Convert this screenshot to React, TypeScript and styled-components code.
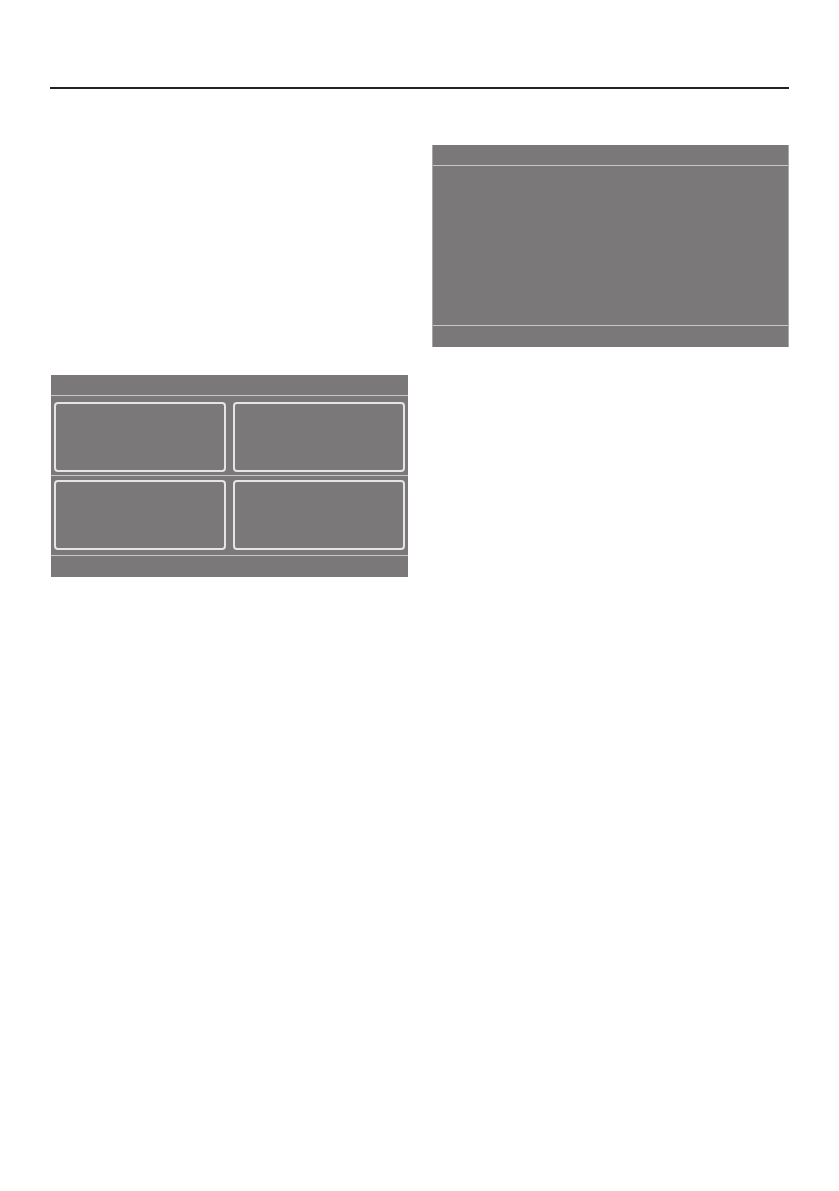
import React from 'react';
import styled, {createGlobalStyle} from 'styled-components';

const Global = createGlobalStyle`
  html, body {
    margin: 0;
    background: #fff;
    font-family: "Liberation Sans", Arial, sans-serif;
  }
`
const Page = styled.div`
  width: 839px;
  min-height: 1191px;
  padding: 87px 50px 0 50px;
  box-sizing: border-box;
`
const Rule = styled.div`
  height: 2px;
  background: #222;
`
const Columns = styled.div`
  display: grid;
  grid-template-columns: 357px 357px;
  column-gap: 24px;
  align-items: start;
  margin: 56px 0 0 1px;
`
const Panel = styled.div<{$offset?: number; $edged?: boolean}>`
  margin-top: ${p => p.$offset || 0}px;
  height: 202px;
  background: #7a7879;
  display: flex;
  flex-direction: column;
  box-sizing: border-box;
  ${p => p.$edged && `
    border-left: 1px solid #a9a8a8;
    border-right: 1px solid #a9a8a8;
  `}
`
const Bar = styled.div<{$h: number}>`
  height: ${p => p.$h}px;
  flex: none;
`
const Line = styled.div`
  height: 1px;
  flex: none;
  background: #c9c8c8;
`
const Body = styled.div`
  flex: 1;
`
const CellRow = styled.div<{$top: number; $bottom: number}>`
  display: grid;
  grid-template-columns: 1fr 1fr;
  column-gap: 7px;
  padding: ${p => p.$top}px 3px ${p => p.$bottom}px;
`
const Cell = styled.div`
  height: 70px;
  box-sizing: border-box;
  border: 2px solid #e6e5e5;
  border-radius: 4px;
`

function App() {
  return (
    <Page>
      <Global/>
      <Rule/>
      <Columns>
        <Panel $offset={230}>
          <Bar $h={20}/>
          <Line/>
          <CellRow $top={6} $bottom={3}>
            <Cell/>
            <Cell/>
          </CellRow>
          <Line/>
          <CellRow $top={4} $bottom={5}>
            <Cell/>
            <Cell/>
          </CellRow>
          <Line/>
          <Bar $h={21}/>
        </Panel>
        <Panel $edged>
          <Bar $h={20}/>
          <Line/>
          <Body/>
          <Line/>
          <Bar $h={21}/>
        </Panel>
      </Columns>
    </Page>
  );
}
export default App
